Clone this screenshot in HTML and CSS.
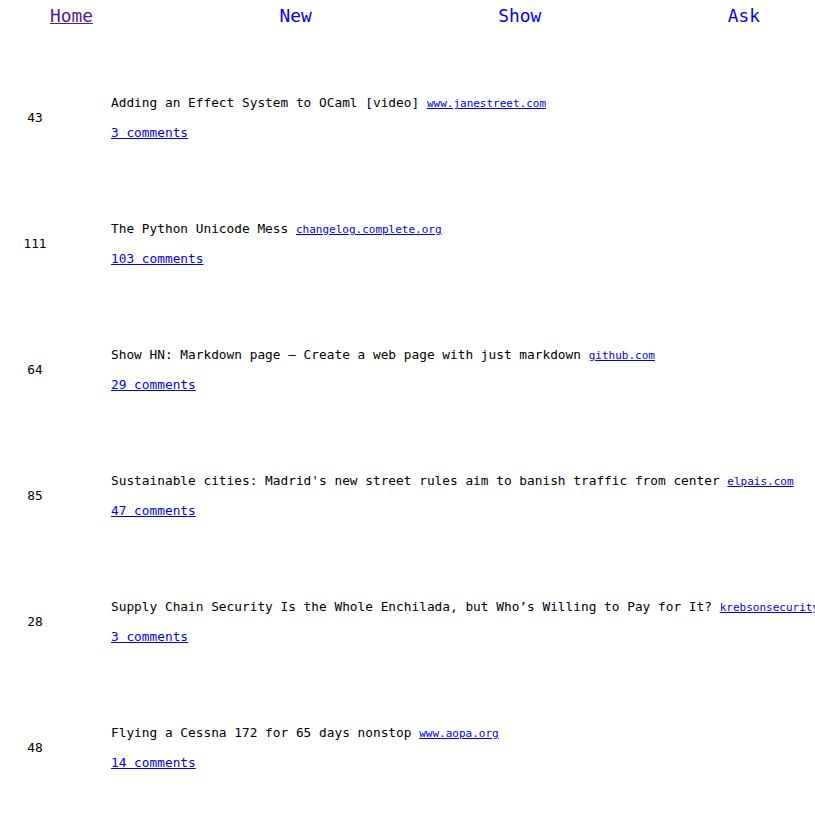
FILE: index.html
```html
<!DOCTYPE html>
<html lang="en">
<head>
<meta charset="utf-8">
<title>Hacker News</title>
<link rel="stylesheet" href="styles.css">
</head>
<body>
<nav class="nav">
  <a class="nav-link is-current" href="#">Home</a>
  <a class="nav-link" href="#">New</a>
  <a class="nav-link" href="#">Show</a>
  <a class="nav-link" href="#">Ask</a>
</nav>
<main class="stories">
  <div class="story">
    <div class="score">43</div>
    <div class="body">
      <p class="title">Adding an Effect System to OCaml [video] <a class="domain" href="#">www.janestreet.com</a></p>
      <p class="meta"><a class="comments" href="#">3 comments</a></p>
    </div>
  </div>
  <div class="story">
    <div class="score">111</div>
    <div class="body">
      <p class="title">The Python Unicode Mess <a class="domain" href="#">changelog.complete.org</a></p>
      <p class="meta"><a class="comments" href="#">103 comments</a></p>
    </div>
  </div>
  <div class="story">
    <div class="score">64</div>
    <div class="body">
      <p class="title">Show HN: Markdown page – Create a web page with just markdown <a class="domain" href="#">github.com</a></p>
      <p class="meta"><a class="comments" href="#">29 comments</a></p>
    </div>
  </div>
  <div class="story">
    <div class="score">85</div>
    <div class="body">
      <p class="title">Sustainable cities: Madrid's new street rules aim to banish traffic from center <a class="domain" href="#">elpais.com</a></p>
      <p class="meta"><a class="comments" href="#">47 comments</a></p>
    </div>
  </div>
  <div class="story">
    <div class="score">28</div>
    <div class="body">
      <p class="title">Supply Chain Security Is the Whole Enchilada, but Who’s Willing to Pay for It? <a class="domain" href="#">krebsonsecurity.com</a></p>
      <p class="meta"><a class="comments" href="#">3 comments</a></p>
    </div>
  </div>
  <div class="story">
    <div class="score">48</div>
    <div class="body">
      <p class="title">Flying a Cessna 172 for 65 days nonstop <a class="domain" href="#">www.aopa.org</a></p>
      <p class="meta"><a class="comments" href="#">14 comments</a></p>
    </div>
  </div>
</main>
</body>
</html>
```
FILE: styles.css
```css
html, body {
  margin: 0;
  padding: 0;
  background: #fff;
  overflow: hidden;
}
body {
  font-family: "DejaVu Sans Mono", monospace;
  color: #000;
}
.nav {
  box-sizing: border-box;
  height: 54px;
  padding: 5px 55px 0 50px;
  display: flex;
  justify-content: space-between;
  align-items: flex-start;
}
.nav-link {
  font-size: 17.86px;
  line-height: 21px;
  color: #0000ee;
  text-decoration: none;
}
.nav-link.is-current {
  color: #551a8b;
  text-decoration: underline;
}
.stories {
  overflow: hidden;
}
.story {
  height: 126px;
  display: grid;
  grid-template-columns: 70px 1fr;
  column-gap: 41px;
  align-items: center;
  font-size: 12.8px;
  line-height: 15px;
}
.score {
  text-align: center;
}
.body {
  white-space: nowrap;
  padding-top: 1px;
}
.title, .meta {
  margin: 0;
}
.meta {
  margin-top: 14px;
}
.domain {
  font-size: 11px;
  color: #0000ee;
}
.comments {
  color: #0000ee;
}
```
